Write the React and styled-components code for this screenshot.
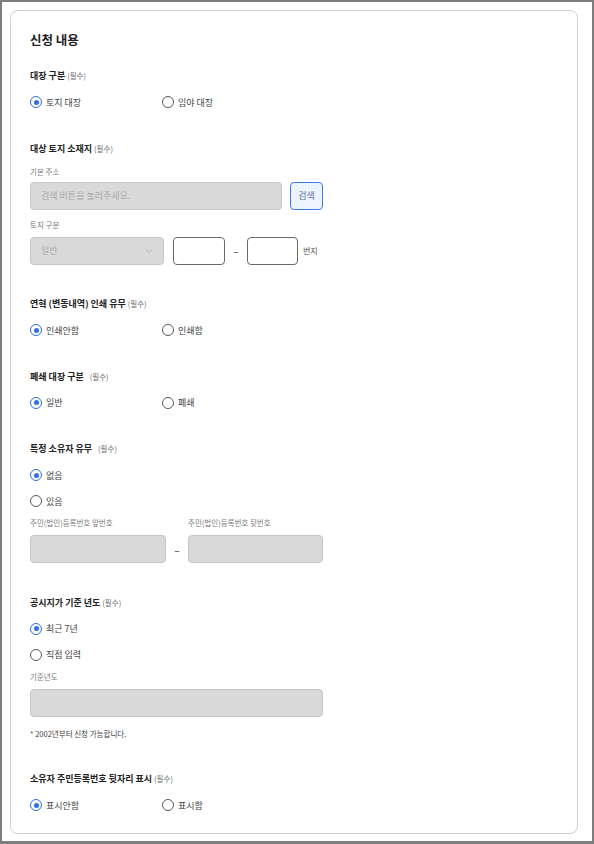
import React, { useState } from "react";
import styled, { createGlobalStyle } from "styled-components";

const GlobalStyle = createGlobalStyle`
  html, body {
    margin: 0;
    padding: 0;
    background: #ffffff;
  }
  body {
    font-family: "Noto Sans CJK KR", "Noto Sans", sans-serif;
    color: #222;
  }
  * {
    box-sizing: border-box;
  }
`;

const Frame = styled.div`
  width: 594px;
  height: 844px;
  border: 2px solid #7d7d7d;
  border-bottom-width: 3px;
  padding: 8px 14px 8px 8px;
  background: #fff;
`;

const Card = styled.div`
  border: 1px solid #cfcfcf;
  border-radius: 8px;
  padding: 20px 19px 20px;
  height: 824px;
`;

const Title = styled.h2`
  margin: 0 0 20px;
  font-size: 12.5px;
  line-height: 18px;
  font-weight: 700;
  color: #1f1f1f;
`;

const Section = styled.section`
  display: flex;
  flex-direction: column;
  & + & {
    margin-top: 32.5px;
  }
`;

const Label = styled.div`
  font-size: 9px;
  line-height: 14px;
  font-weight: 700;
  color: #222;
  margin-bottom: 12px;
`;

const Required = styled.span`
  font-size: 7.5px;
  font-weight: 400;
  color: #6b6b6b;
  margin-left: ${(p) => (p.$wide ? "6px" : "2px")};
`;

const RadioRow = styled.div`
  display: flex;
  flex-direction: ${(p) => (p.$gap ? "column" : "row")};
  gap: ${(p) => p.$gap || 0}px;
`;

const Option = styled.label`
  display: flex;
  align-items: center;
  width: 132px;
  height: 14px;
  gap: 4px;
  font-size: 9px;
  color: #444;
  cursor: pointer;
`;

const Circle = styled.span`
  width: 12px;
  height: 12px;
  border-radius: 50%;
  border: 1.3px solid ${(p) => (p.$on ? "#2f6fe6" : "#5a5a5a")};
  display: flex;
  align-items: center;
  justify-content: center;
  flex-shrink: 0;
  &::after {
    content: "";
    width: 5px;
    height: 5px;
    border-radius: 50%;
    background: #2f6fe6;
    display: ${(p) => (p.$on ? "block" : "none")};
  }
`;

const SubLabel = styled.div`
  font-size: 7.5px;
  line-height: 12px;
  color: #7a7a7a;
  width: ${(p) => (p.$w ? `${p.$w}px` : "auto")};
  margin-top: ${(p) => p.$top || 0}px;
  margin-bottom: ${(p) => (p.$bottom !== undefined ? p.$bottom : 6)}px;
`;

const FieldRow = styled.div`
  display: flex;
  align-items: center;
  gap: ${(p) => p.$gap || 0}px;
`;

const Input = styled.div`
  width: ${(p) => p.$w}px;
  height: 28px;
  margin-right: ${(p) => p.$after || 0}px;
  border-radius: 4px;
  border: 1px solid ${(p) => (p.$blank ? "#6a6a6a" : "#c6c6c6")};
  background: ${(p) => (p.$blank ? "#fff" : "#d9d9d9")};
  display: flex;
  align-items: center;
  justify-content: space-between;
  padding: 0 10px;
  font-size: 9px;
  color: #a9a9a9;
`;

const SearchButton = styled.button`
  width: 33px;
  height: 28px;
  border-radius: 4px;
  border: 1px solid #3d7cf0;
  background: #eef4ff;
  color: #5672ad;
  font-family: inherit;
  font-size: 9px;
  padding: 0;
`;

const Dash = styled.span`
  width: 22px;
  text-align: center;
  font-size: 10px;
  color: #333;
`;

const Unit = styled.span`
  margin-left: 5px;
  font-size: 8px;
  color: #555;
`;

const Note = styled.div`
  margin-top: 11px;
  font-size: 7.5px;
  line-height: 12px;
  color: #444;
`;

const Chevron = () => (
  <svg width="8" height="6" viewBox="0 0 8 6" fill="none">
    <path d="M1 1.5 L4 4.5 L7 1.5" stroke="#b3b3b3" strokeWidth="1" />
  </svg>
);

function Radio({ options, gap, initial = 0 }) {
  const [value, setValue] = useState(initial);
  return (
    <RadioRow $gap={gap}>
      {options.map((o, i) => (
        <Option key={o} onClick={() => setValue(i)}>
          <Circle $on={value === i} />
          {o}
        </Option>
      ))}
    </RadioRow>
  );
}

function FieldLabel({ text, wide }) {
  return (
    <Label>
      {text}
      <Required $wide={wide}>(필수)</Required>
    </Label>
  );
}

export default function App() {
  return (
    <>
      <GlobalStyle />
      <Frame>
        <Card>
          <Title>신청 내용</Title>

          <Section>
            <FieldLabel text="대장 구분" />
            <Radio options={["토지 대장", "임야 대장"]} />
          </Section>

          <Section>
            <FieldLabel text="대상 토지 소재지" />
            <SubLabel $top={-2} $bottom={4}>
              기본 주소
            </SubLabel>
            <FieldRow $gap={8}>
              <Input $w={252}>검색 버튼을 눌러주세요.</Input>
              <SearchButton>검색</SearchButton>
            </FieldRow>
            <SubLabel $top={9}>토지 구분</SubLabel>
            <FieldRow>
              <Input $w={134} $after={9}>
                일반
                <Chevron />
              </Input>
              <Input $w={52} $blank />
              <Dash>–</Dash>
              <Input $w={51} $blank />
              <Unit>번지</Unit>
            </FieldRow>
          </Section>

          <Section>
            <FieldLabel text="연혁 (변동내역) 인쇄 유무" />
            <Radio options={["인쇄안함", "인쇄함"]} />
          </Section>

          <Section>
            <FieldLabel text="폐쇄 대장 구분" wide />
            <Radio options={["일반", "폐쇄"]} />
          </Section>

          <Section>
            <FieldLabel text="특정 소유자 유무" wide />
            <Radio gap={12} options={["없음", "있음"]} />
            <FieldRow>
              <SubLabel $top={9} $w={158}>
                주민(법인)등록번호 앞번호
              </SubLabel>
              <SubLabel $top={9}>주민(법인)등록번호 뒷번호</SubLabel>
            </FieldRow>
            <FieldRow>
              <Input $w={136} />
              <Dash>–</Dash>
              <Input $w={135} />
            </FieldRow>
          </Section>

          <Section>
            <FieldLabel text="공시지가 기준 년도" />
            <Radio gap={12} options={["최근 7년", "직접 입력"]} />
            <SubLabel $top={9}>기준년도</SubLabel>
            <Input $w={293} />
            <Note>* 2002년부터 신청 가능합니다.</Note>
          </Section>

          <Section>
            <FieldLabel text="소유자 주민등록번호 뒷자리 표시" />
            <Radio options={["표시안함", "표시함"]} />
          </Section>
        </Card>
      </Frame>
    </>
  );
}
